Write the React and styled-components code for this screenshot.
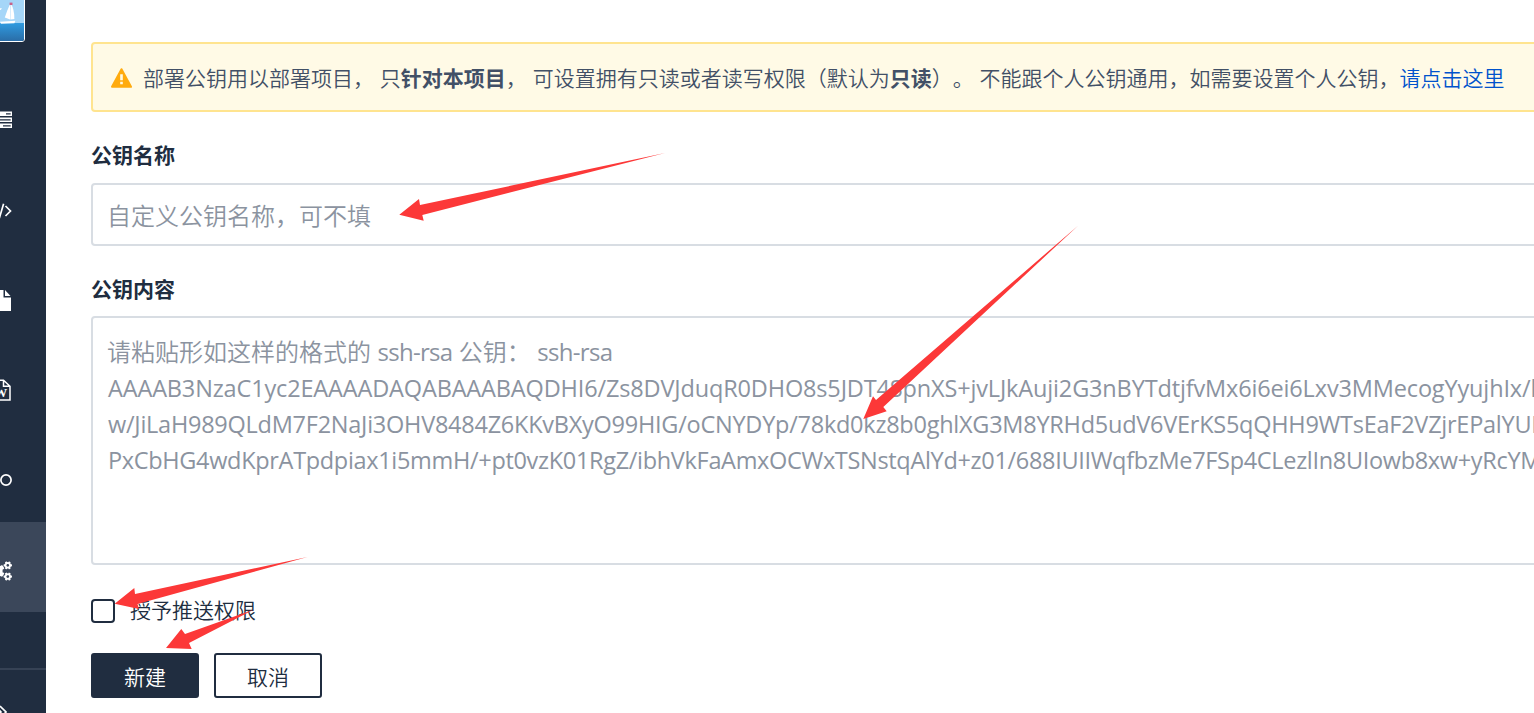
import React, { useState } from "react";
import styled, { createGlobalStyle } from "styled-components";
import { FaCogs } from "react-icons/fa";

const GlobalStyle = createGlobalStyle`
  * {
    box-sizing: border-box;
  }
  body {
    margin: 0;
    background-color: #ffffff;
    font-family: "Open Sans", "Noto Sans CJK SC", sans-serif;
    text-spacing-trim: space-all;
    color: #202d40;
    overflow: hidden;
  }
`;
const Page = styled.div`
  position: relative;
  display: flex;
  width: 1534px;
  height: 713px;
  overflow: hidden;
`;
const Sidebar = styled.nav`
  flex: none;
  display: flex;
  flex-direction: column;
  align-items: center;
  width: 92px;
  height: 721px;
  margin-left: -46px;
  margin-top: -8px;
  background-color: #202d40;
`;
const Avatar = styled.svg`
  flex: none;
  width: 50px;
  height: 50px;
  margin-bottom: 30px;
  border: 1px solid #ffffff;
  border-radius: 3px;
`;
const NavItem = styled.a`
  flex: none;
  display: flex;
  align-items: center;
  justify-content: center;
  width: 100%;
  height: 90px;
  padding-top: ${(props) => props.$top || 6}px;
  color: #ffffff;
  background-color: ${(props) => (props.$active ? "#3b475a" : "transparent")};
`;
const Expand = styled.div`
  display: flex;
  justify-content: center;
  width: 100%;
  margin-top: 56px;
  padding-top: 35px;
  border-top: 2px solid #364255;
`;
const Main = styled.main`
  flex: none;
  width: 1600px;
  padding: 42px 0 0 45px;
`;
const Alert = styled.div`
  display: flex;
  align-items: center;
  height: 70px;
  padding: 2px 0 0 18px;
  border: 2px solid #ffe48f;
  border-radius: 4px;
  background-color: #fffae6;
`;
const AlertText = styled.p`
  margin: 0 0 0 11px;
  font-size: 21px;
  font-weight: 350;
  line-height: 32px;
  word-spacing: 0.4px;
  white-space: nowrap;
  color: #425066;
`;
const Strong = styled.b`
  font-weight: 700;
`;
const Link = styled.a`
  color: #0052cc;
`;
const Form = styled.form`
  display: flex;
  flex-direction: column;
`;
const Label = styled.label`
  height: 30px;
  margin-top: 28px;
  margin-bottom: ${(props) => props.$bottom}px;
  font-size: 21px;
  font-weight: 700;
  line-height: 30px;
`;
const Input = styled.input`
  height: 63px;
  padding: 1px 14px 0;
  border: 2px solid #d8dde3;
  border-radius: 4px;
  outline: none;
  font-family: inherit;
  font-size: 24px;
  font-weight: 350;
  &::placeholder {
    color: #8b93a0;
    opacity: 1;
  }
`;
const KeyBox = styled.div`
  height: 249px;
  padding: 16px 14px 16px 15px;
  border: 2px solid #d8dde3;
  border-radius: 4px;
  overflow: hidden;
`;
const KeyLine = styled.div`
  height: 36px;
  font-size: 23.5px;
  line-height: 36px;
  letter-spacing: ${(props) => props.$track || 0}px;
  white-space: pre;
  color: #8b93a0;
`;
const KeyHint = styled(KeyLine)`
  margin-left: -1px;
  font-size: 24px;
  font-weight: 350;
  word-spacing: 0.2px;
`;
const Latin = styled.span`
  font-weight: 400;
  letter-spacing: -0.7px;
`;
const CheckRow = styled.label`
  display: flex;
  align-items: center;
  height: 24px;
  margin-top: 34px;
  font-size: 21px;
  font-weight: 350;
`;
const CheckText = styled.span`
  margin-top: -4px;
`;
const Checkbox = styled.input`
  appearance: none;
  width: 24px;
  height: 24px;
  margin: 0 15px 0 0;
  border: 2px solid #202d40;
  border-radius: 4px;
  background-color: #ffffff;
  &:checked {
    background-color: #202d40;
  }
`;
const Actions = styled.div`
  display: flex;
  gap: 15px;
  margin-top: 30px;
`;
const Button = styled.button`
  width: 108px;
  height: 45px;
  padding: 2px 0 0;
  border: 2px solid #202d40;
  border-radius: 3px;
  background-color: ${(props) => (props.$primary ? "#202d40" : "#ffffff")};
  color: ${(props) => (props.$primary ? "#ffffff" : "#202d40")};
  font-family: inherit;
  font-size: 21px;
  font-weight: 350;
  line-height: 30px;
  cursor: pointer;
`;
// red marks pointing at the fields, on top of the form
const Arrows = styled.svg`
  position: absolute;
  top: 0;
  left: 0;
  pointer-events: none;
`;

const keyLines = [
  {
    text: "AAAAB3NzaC1yc2EAAAADAQABAAABAQDHI6/Zs8DVJduqR0DHO8s5JDT4SpnXS+jvLJkAuji2G3nBYTdtjfvMx6i6ei6Lxv3MMecogYyujhIx/k",
    track: -0.15,
  },
  {
    text: "w/JiLaH989QLdM7F2NaJi3OHV8484Z6KKvBXyO99HIG/oCNYDYp/78kd0kz8b0ghlXG3M8YRHd5udV6VErKS5qQHH9WTsEaF2VZjrEPalYUL",
    track: -0.25,
  },
  {
    text: "PxCbHG4wdKprATpdpiax1i5mmH/+pt0vzK01RgZ/ibhVkFaAmxOCWxTSNstqAlYd+z01/688IUIIWqfbzMe7FSp4CLezlIn8UIowb8xw+yRcYM",
    track: -0.32,
  },
];

const arrows = [
  "399.3,214.7 419,199 420,205 665,153 422.3,215 423.7,220.7",
  "863.3,419 873,396.3 876,400 1078,225.7 883.3,407 886.7,411.3",
  "114.7,603.7 134.3,588 135,594 307.5,557 137.5,604 139,609",
  "166,648 181.3,629 185,634 254,609.5 189,643 191.7,649",
];

function AvatarPicture() {
  return (
    <Avatar viewBox="-25 -8 50 50">
      <defs>
        <linearGradient id="sea" x1="0" y1="0" x2="0" y2="1">
          <stop offset="0" stopColor="#2f9be0" />
          <stop offset="1" stopColor="#2a6ca6" />
        </linearGradient>
      </defs>
      <rect x="-25" y="-8" width="50" height="32" fill="#a5d6f8" />
      <rect x="-25" y="23.3" width="50" height="19" fill="url(#sea)" />
      <path d="M-8 11 Q-3 7 2 8 L1 9.500 Q-3 10 -6 13 Z" fill="#fff" />
      <path d="M10.800 3 Q7 11 5 17.500 L10.500 19.500 Z" fill="#fff" />
      <path d="M11.200 3 Q15 9 15 19 L10.800 19.500 Z" fill="#fff" />
      <path d="M0 22 L16 21 L15 23.500 L1 24 Z" fill="#fff" />
      <rect x="10" y="2" width="3" height="2.500" fill="#c9628a" />
    </Avatar>
  );
}

function ServerIcon() {
  return (
    <svg width="24" height="18" viewBox="0 0 24 18">
      <path d="M0 0.500h24v4.500H0zM0 6.500h24v4.500H0zM0 12.500h24v4.500H0z" fill="#fff" />
      <path d="M18 2.800h4.700M10 8.800h12.700M15 14.800h7.700" stroke="#202d40" strokeWidth="1.200" />
    </svg>
  );
}

function CodeIcon() {
  return (
    <svg width="24" height="18" viewBox="0 0 24 18" fill="none" stroke="#fff" strokeWidth="1.700">
      <path d="M6 4L1 9l5 5M15.600 1.800L11.300 16.200M17.500 4l5 5-5 5" />
    </svg>
  );
}

function FileIcon() {
  return (
    <svg width="22" height="22" viewBox="0 0 22 22" fill="#fff">
      <path d="M2 1h12.500v7.500H22V22H2z" />
      <path d="M16 1l5.500 6H16z" />
    </svg>
  );
}

function WordIcon() {
  return (
    <svg width="22" height="22" viewBox="0 0 22 22">
      <path
        d="M2 1.300h12.500l6.500 6V21H2zM14.500 1.300v6h6.500"
        fill="none"
        stroke="#fff"
        strokeWidth="1.500"
      />
      <text
        x="11.700"
        y="18"
        textAnchor="middle"
        fontFamily="Liberation Serif, serif"
        fontSize="13"
        fontWeight="700"
        fill="#fff"
      >
        W
      </text>
    </svg>
  );
}

function FlowIcon() {
  return (
    <svg width="24" height="14" viewBox="0 0 24 14" fill="none" stroke="#fff" strokeWidth="1.700">
      <circle cx="6" cy="7" r="5.100" />
      <circle cx="18" cy="7" r="5.100" />
    </svg>
  );
}

function WarningIcon() {
  return (
    <svg width="21" height="20" viewBox="0 0 21 20">
      <path
        d="M10.500 1.200L20 18.800H1z"
        fill="#ffab0f"
        stroke="#ffab0f"
        strokeWidth="2"
        strokeLinejoin="round"
      />
      <path d="M9.200 6.300h2.600v6H9.200zM9.200 13.800h2.600v2.400H9.200z" fill="#fffae6" />
    </svg>
  );
}

function App() {
  const [name, setName] = useState("");
  const [push, setPush] = useState(false);

  return (
    <Page>
      <GlobalStyle />
      <Sidebar>
        <AvatarPicture />
        <NavItem>
          <ServerIcon />
        </NavItem>
        <NavItem $top={8}>
          <CodeIcon />
        </NavItem>
        <NavItem>
          <FileIcon />
        </NavItem>
        <NavItem>
          <WordIcon />
        </NavItem>
        <NavItem>
          <FlowIcon />
        </NavItem>
        <NavItem $active $top={7}>
          <FaCogs size={24} />
        </NavItem>
        <Expand>
          <svg width="14" height="14" viewBox="0 0 14 14" fill="none" stroke="#fff" strokeWidth="1.600">
            <path d="M2 1l6 6-6 6M7 1l6 6-6 6" />
          </svg>
        </Expand>
      </Sidebar>
      <Main>
        <Alert>
          <WarningIcon />
          <AlertText>
            部署公钥用以部署项目， 只<Strong>针对本项目</Strong>， 可设置拥有只读或者读写权限（默认为
            <Strong>只读</Strong>）。 不能跟个人公钥通用，如需要设置个人公钥，
            <Link>请点击这里</Link>
          </AlertText>
        </Alert>
        <Form onSubmit={(e) => e.preventDefault()}>
          <Label $bottom={13}>公钥名称</Label>
          <Input
            onChange={(e) => setName(e.target.value)}
            value={name}
            type="text"
            name="name"
            placeholder="自定义公钥名称，可不填"
          />
          <Label $bottom={12}>公钥内容</Label>
          <KeyBox>
            <KeyHint>
              请粘贴形如这样的格式的 <Latin>ssh-rsa</Latin> 公钥： <Latin>ssh-rsa</Latin>
            </KeyHint>
            {keyLines.map((line) => (
              <KeyLine key={line.text} $track={line.track}>
                {line.text}
              </KeyLine>
            ))}
          </KeyBox>
          <CheckRow>
            <Checkbox type="checkbox" checked={push} onChange={(e) => setPush(e.target.checked)} />
            <CheckText>授予推送权限</CheckText>
          </CheckRow>
          <Actions>
            <Button $primary>新建</Button>
            <Button type="button">取消</Button>
          </Actions>
        </Form>
      </Main>
      <Arrows width="1534" height="713">
        {arrows.map((points) => (
          <polygon key={points} points={points} fill="#fc3838" />
        ))}
      </Arrows>
    </Page>
  );
}

export default App;
